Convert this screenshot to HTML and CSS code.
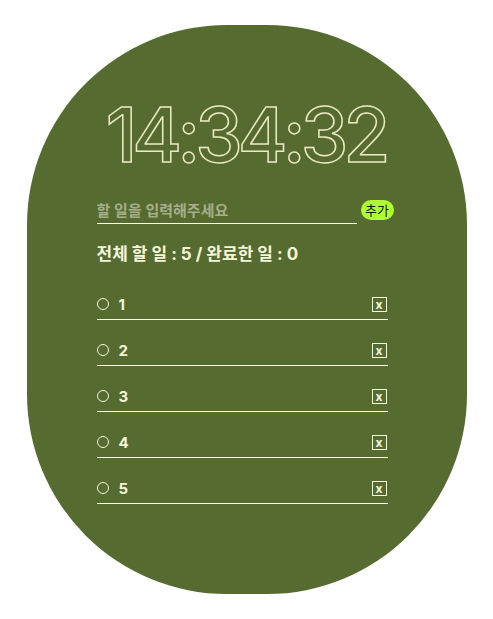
FILE: index.html
```html
<!DOCTYPE html>
<html lang="ko">
<head>
<meta charset="utf-8">
<title>Todo</title>
<link rel="stylesheet" href="styles.css">
</head>
<body>
<main class="card">
  <div class="clock">14:34:32</div>
  <form class="add-form">
    <input class="todo-input" type="text" placeholder="할 일을 입력해주세요">
    <button class="add-btn" type="button">추가</button>
  </form>
  <p class="stats">전체 할 일 : 5 / 완료한 일 : 0</p>
  <ul class="todo-list">
    <li class="todo-item"><span class="check"></span><span class="todo-text">1</span><button class="del-btn" type="button">x</button></li>
    <li class="todo-item"><span class="check"></span><span class="todo-text">2</span><button class="del-btn" type="button">x</button></li>
    <li class="todo-item"><span class="check"></span><span class="todo-text">3</span><button class="del-btn" type="button">x</button></li>
    <li class="todo-item"><span class="check"></span><span class="todo-text">4</span><button class="del-btn" type="button">x</button></li>
    <li class="todo-item"><span class="check"></span><span class="todo-text">5</span><button class="del-btn" type="button">x</button></li>
  </ul>
</main>
</body>
</html>
```

FILE: styles.css
```css
* { box-sizing: border-box; }

html, body {
  margin: 0;
  padding: 0;
  background: #ffffff;
}

body {
  padding-top: 25px;
  font-family: Inter, "Noto Sans CJK KR", sans-serif;
  color: #f5f5dc;
}

.card {
  width: 440px;
  height: 569px;
  margin: 0 auto;
  background: #556b2f;
  border-radius: 200px;
  padding: 0 40px 0 70px;
  display: flex;
  flex-direction: column;
}

.clock {
  margin-top: 63px;
  margin-left: -32px;
  font-size: 76px;
  line-height: 92px;
  font-weight: 500;
  text-align: center;
  color: transparent;
  -webkit-text-stroke: 1.5px #ece8c4;
  letter-spacing: -5px;
}

.add-form {
  margin: 18px 0 0;
  display: flex;
  align-items: flex-end;
  gap: 4px;
}

.todo-input {
  width: 260px;
  flex: none;
  height: 26px;
  border: none;
  border-bottom: 1px solid #fffbe6;
  background: transparent;
  padding: 0;
  font-family: Inter, "Noto Sans CJK KR", sans-serif;
  font-size: 15px;
  font-weight: 600;
  color: #f5f5dc;
  outline: none;
}

.todo-input::placeholder {
  color: #a7ae8c;
}

.add-btn {
  width: 33px;
  height: 20px;
  flex: none;
  margin-bottom: 4px;
  border: none;
  border-radius: 10px;
  background: #adff2f;
  color: #111;
  font-family: "Noto Sans CJK KR", sans-serif;
  font-size: 13px;
  padding: 0;
  line-height: 20px;
}

.stats {
  margin: 18px 0 0;
  font-size: 17px;
  font-weight: 700;
  line-height: 24px;
  color: #f5f5dc;
}

.todo-list {
  list-style: none;
  margin: 8px 0 0;
  padding: 0;
  width: 291px;
}

.todo-item {
  display: flex;
  align-items: center;
  height: 31px;
  margin-top: 15px;
  border-bottom: 1px solid #fffbe6;
}

.check {
  width: 12px;
  height: 12px;
  border: 1px solid #f5f5dc;
  border-radius: 50%;
  margin-right: 10px;
  flex: none;
}

.todo-text {
  flex: 1;
  font-size: 15px;
  font-weight: 700;
  color: #f5f5dc;
}

.del-btn {
  width: 15px;
  height: 15px;
  border: 1px solid #f5f5dc;
  background: transparent;
  color: #f5f5dc;
  font-family: Inter, sans-serif;
  font-size: 12px;
  font-weight: 700;
  line-height: 11px;
  padding: 0;
  margin-right: 1px;
}
```
